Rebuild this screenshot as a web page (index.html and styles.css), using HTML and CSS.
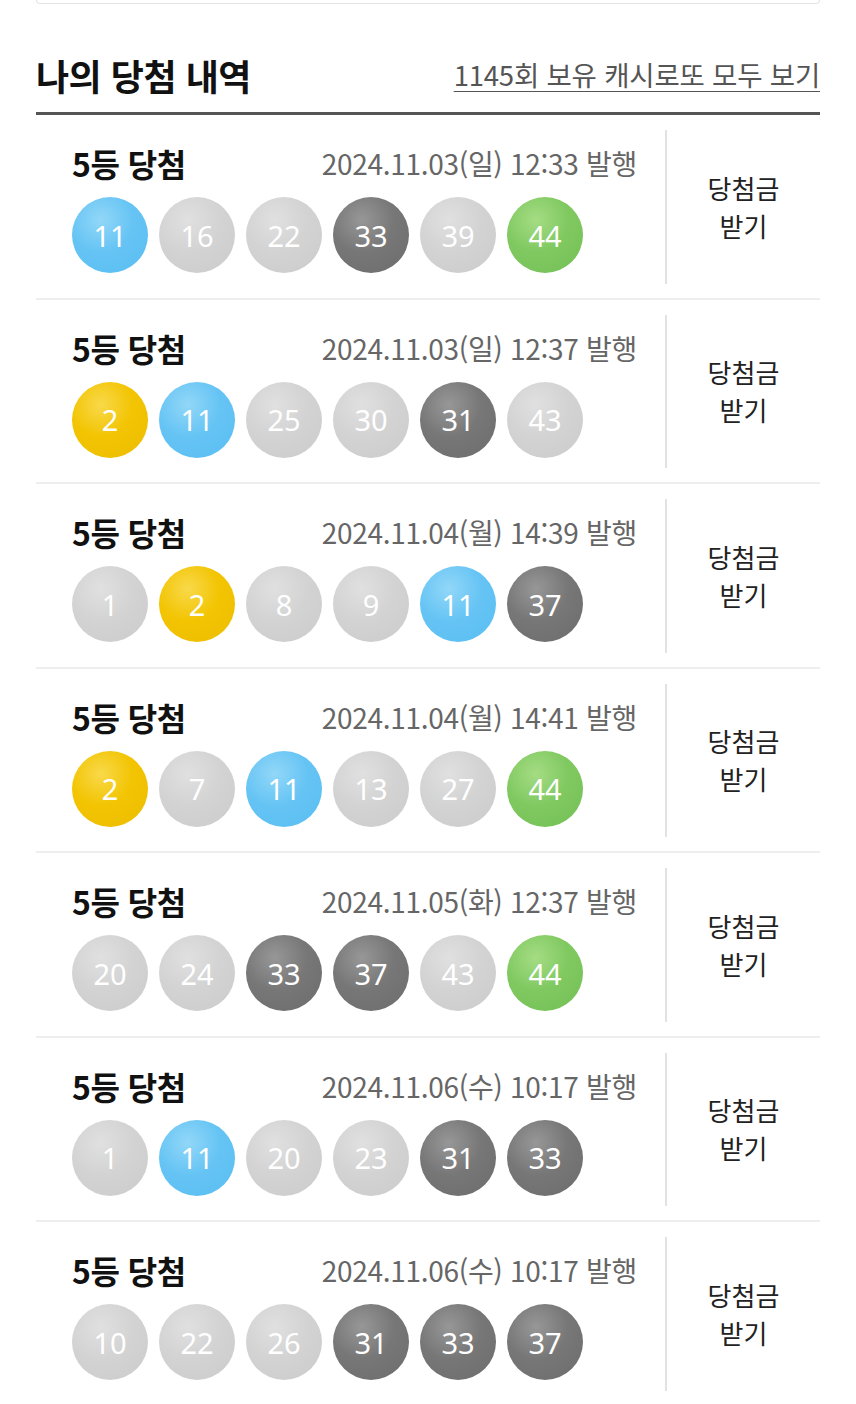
FILE: index.html
```html
<!DOCTYPE html>
<html lang="ko">
<head>
<meta charset="utf-8">
<link rel="stylesheet" href="styles.css">
</head>
<body>
<div class="page">
  <div class="topcard"></div>
  <div class="head">
    <h2 class="head-title">나의 당첨 내역</h2>
    <a class="head-link">1145회 보유 캐시로또 모두 보기</a>
  </div>
  <div class="list">
    <div class="row">
      <div class="info">
        <div class="line"><span class="rank">5등 당첨</span><span class="date">2024.11.03(일) 12:33 발행</span></div>
        <div class="balls"><span class="ball blue">11</span><span class="ball gray">16</span><span class="ball gray">22</span><span class="ball dark">33</span><span class="ball gray">39</span><span class="ball green">44</span></div>
      </div>
      <div class="btn"><span>당첨금<br>받기</span></div>
    </div>
    <div class="row">
      <div class="info">
        <div class="line"><span class="rank">5등 당첨</span><span class="date">2024.11.03(일) 12:37 발행</span></div>
        <div class="balls"><span class="ball yellow">2</span><span class="ball blue">11</span><span class="ball gray">25</span><span class="ball gray">30</span><span class="ball dark">31</span><span class="ball gray">43</span></div>
      </div>
      <div class="btn"><span>당첨금<br>받기</span></div>
    </div>
    <div class="row">
      <div class="info">
        <div class="line"><span class="rank">5등 당첨</span><span class="date">2024.11.04(월) 14:39 발행</span></div>
        <div class="balls"><span class="ball gray">1</span><span class="ball yellow">2</span><span class="ball gray">8</span><span class="ball gray">9</span><span class="ball blue">11</span><span class="ball dark">37</span></div>
      </div>
      <div class="btn"><span>당첨금<br>받기</span></div>
    </div>
    <div class="row">
      <div class="info">
        <div class="line"><span class="rank">5등 당첨</span><span class="date">2024.11.04(월) 14:41 발행</span></div>
        <div class="balls"><span class="ball yellow">2</span><span class="ball gray">7</span><span class="ball blue">11</span><span class="ball gray">13</span><span class="ball gray">27</span><span class="ball green">44</span></div>
      </div>
      <div class="btn"><span>당첨금<br>받기</span></div>
    </div>
    <div class="row">
      <div class="info">
        <div class="line"><span class="rank">5등 당첨</span><span class="date">2024.11.05(화) 12:37 발행</span></div>
        <div class="balls"><span class="ball gray">20</span><span class="ball gray">24</span><span class="ball dark">33</span><span class="ball dark">37</span><span class="ball gray">43</span><span class="ball green">44</span></div>
      </div>
      <div class="btn"><span>당첨금<br>받기</span></div>
    </div>
    <div class="row">
      <div class="info">
        <div class="line"><span class="rank">5등 당첨</span><span class="date">2024.11.06(수) 10:17 발행</span></div>
        <div class="balls"><span class="ball gray">1</span><span class="ball blue">11</span><span class="ball gray">20</span><span class="ball gray">23</span><span class="ball dark">31</span><span class="ball dark">33</span></div>
      </div>
      <div class="btn"><span>당첨금<br>받기</span></div>
    </div>
    <div class="row">
      <div class="info">
        <div class="line"><span class="rank">5등 당첨</span><span class="date">2024.11.06(수) 10:17 발행</span></div>
        <div class="balls"><span class="ball gray">10</span><span class="ball gray">22</span><span class="ball gray">26</span><span class="ball dark">31</span><span class="ball dark">33</span><span class="ball dark">37</span></div>
      </div>
      <div class="btn"><span>당첨금<br>받기</span></div>
    </div>
  </div>
</div>
</body>
</html>
```
FILE: styles.css
```css
* { box-sizing: border-box; }
html, body { margin: 0; padding: 0; background: #fff; }
body {
  font-family: "Noto Sans CJK KR", "Noto Sans", sans-serif;
  color: #111;
  width: 856px;
  overflow: hidden;
}
.page { padding: 0 36px; }
.topcard {
  height: 4px;
  border: 1px solid #e4e4e4;
  border-top: none;
  border-radius: 0 0 12px 12px;
}
.head {
  display: flex;
  justify-content: space-between;
  align-items: center;
  height: 111px;
  padding-top: 34px;
  border-bottom: 3px solid #555;
}
.head-title {
  margin: 0;
  font-size: 36px;
  font-weight: 700;
  line-height: 1;
  color: #111;
  letter-spacing: -0.5px;
}
.head-link {
  font-size: 27.5px;
  color: #555;
  text-decoration: underline;
  text-underline-offset: 5px;
  text-decoration-thickness: 1px;
  line-height: 1;
  letter-spacing: -0.2px;
}
.row {
  display: flex;
  height: 184.5px;
  border-bottom: 2px solid #eeeeee;
}
.info {
  width: 629px;
  padding: 29px 28px 0 36px;
}
.line {
  display: flex;
  justify-content: space-between;
  align-items: center;
  height: 38px;
}
.rank {
  font-size: 32px;
  font-weight: 700;
  color: #111;
  letter-spacing: -0.5px;
}
.date {
  font-size: 28px;
  color: #666;
  letter-spacing: -0.3px;
}
.balls {
  display: flex;
  gap: 11px;
  margin-top: 15px;
}
.ball {
  width: 76px;
  height: 76px;
  border-radius: 50%;
  display: flex;
  align-items: center;
  justify-content: center;
  color: #fff;
  font-family: "Noto Sans", sans-serif;
  font-size: 29px;
  line-height: 1;
}
.ball.gray { background: radial-gradient(circle at 38% 30%, #e0e0e0 0%, #d3d3d3 45%, #cbcbcb 100%); }
.ball.dark { background: radial-gradient(circle at 38% 30%, #979797 0%, #777777 45%, #6c6c6c 100%); }
.ball.blue { background: radial-gradient(circle at 38% 30%, #92d7f8 0%, #66c4f4 45%, #58bdf2 100%); }
.ball.yellow { background: radial-gradient(circle at 38% 30%, #f9d94a 0%, #f2c402 45%, #ebbd00 100%); }
.ball.green { background: radial-gradient(circle at 38% 30%, #a5dc84 0%, #80c961 45%, #73c054 100%); }
.btn {
  flex: 1;
  margin: 15px 0 14px;
  border-left: 2px solid #e2e2e2;
  display: flex;
  align-items: center;
  justify-content: center;
  text-align: center;
  font-size: 26px;
  line-height: 38px;
  color: #222;
}
```
